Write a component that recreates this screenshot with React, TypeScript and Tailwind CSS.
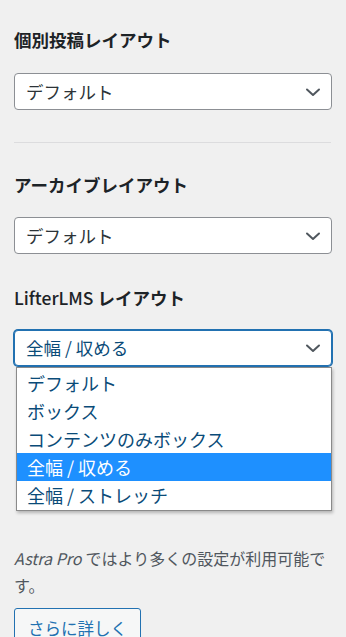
import React from "react";

const FONT = '"Noto Sans CJK JP", "Noto Sans", sans-serif';

const options = ["デフォルト", "ボックス", "コンテンツのみボックス", "全幅 / 収める", "全幅 / ストレッチ"];

const Chevron: React.FC = () => (
  <svg width="16" height="16" viewBox="0 0 16 16" fill="none" stroke="#50575e" strokeWidth="2" strokeLinecap="round" strokeLinejoin="round">
    <path d="M2 5.5 L8 11 L14 5.5" />
  </svg>
);

interface SelectBoxProps {
  value: string;
  focused?: boolean;
}

const SelectBox: React.FC<SelectBoxProps> = ({ value, focused = false }) => (
  <div
    className={
      focused
        ? "flex items-center justify-between h-[36px] pl-[11px] pr-[10px] bg-white rounded-[4px] border border-[#2271b1] shadow-[0_0_0_1px_#2271b1] text-[#0a4b78]"
        : "flex items-center justify-between h-[37px] pl-[11px] pr-[10px] bg-white rounded-[4px] border border-[#8c8f94] text-[#2c3338]"
    }
  >
    <span className="text-[17.5px] leading-none">{value}</span>
    <Chevron />
  </div>
);

const Heading: React.FC<{ children: React.ReactNode; className?: string }> = ({ children, className = "" }) => (
  <h3 className={`text-[17.5px] leading-[24px] font-semibold text-[#1d2327] ${className}`}>{children}</h3>
);

export default function App() {
  return (
    <div className="min-h-screen bg-[#f0f0f0] px-[14px] pt-[28px] overflow-hidden" style={{ fontFamily: FONT }}>
      <Heading>個別投稿レイアウト</Heading>
      <div className="mt-[21px]">
        <SelectBox value="デフォルト" />
      </div>

      <hr className="mt-[32px] border-0 h-px bg-[#dcdcde] mr-[1px]" />

      <Heading className="mt-[30px]">アーカイブレイアウト</Heading>
      <div className="mt-[20px]">
        <SelectBox value="デフォルト" />
      </div>

      <Heading className="mt-[32px]">
        <span className="font-medium">LifterLMS</span> レイアウト
      </Heading>
      <div className="relative mt-[20px]">
        <SelectBox value="全幅 / 収める" focused />

        {/* open dropdown list, lies over the next setting */}
        <div className="absolute z-10 left-[2px] right-0 top-[37px] bg-white border border-[#8a8a8a] shadow-[1px_2px_3px_rgba(0,0,0,0.25)] py-[1px]">
          {options.map((opt) => (
            <div
              key={opt}
              className={
                opt === "全幅 / 収める"
                  ? "h-[28px] flex items-center pl-[10px] bg-[#1e90ff] text-white text-[18px]"
                  : "h-[28px] flex items-center pl-[10px] text-[#0a4b78] text-[18px]"
              }
            >
              {opt}
            </div>
          ))}
        </div>

        {/* room taken by the setting hidden under the list */}
        <div className="h-[176px]" />
      </div>

      <p className="mt-[3px] text-[16px] leading-[27px] text-[#50575e]">
        <em className="pr-[4px]">Astra Pro</em>ではより多くの設定が利用可能です。
      </p>

      <button className="mt-[9px] h-[40px] px-[13px] rounded-[3px] border border-[#2271b1] bg-[#f6f7f7] text-[#2271b1] text-[16.5px] leading-none">
        さらに詳しく
      </button>
    </div>
  );
}
